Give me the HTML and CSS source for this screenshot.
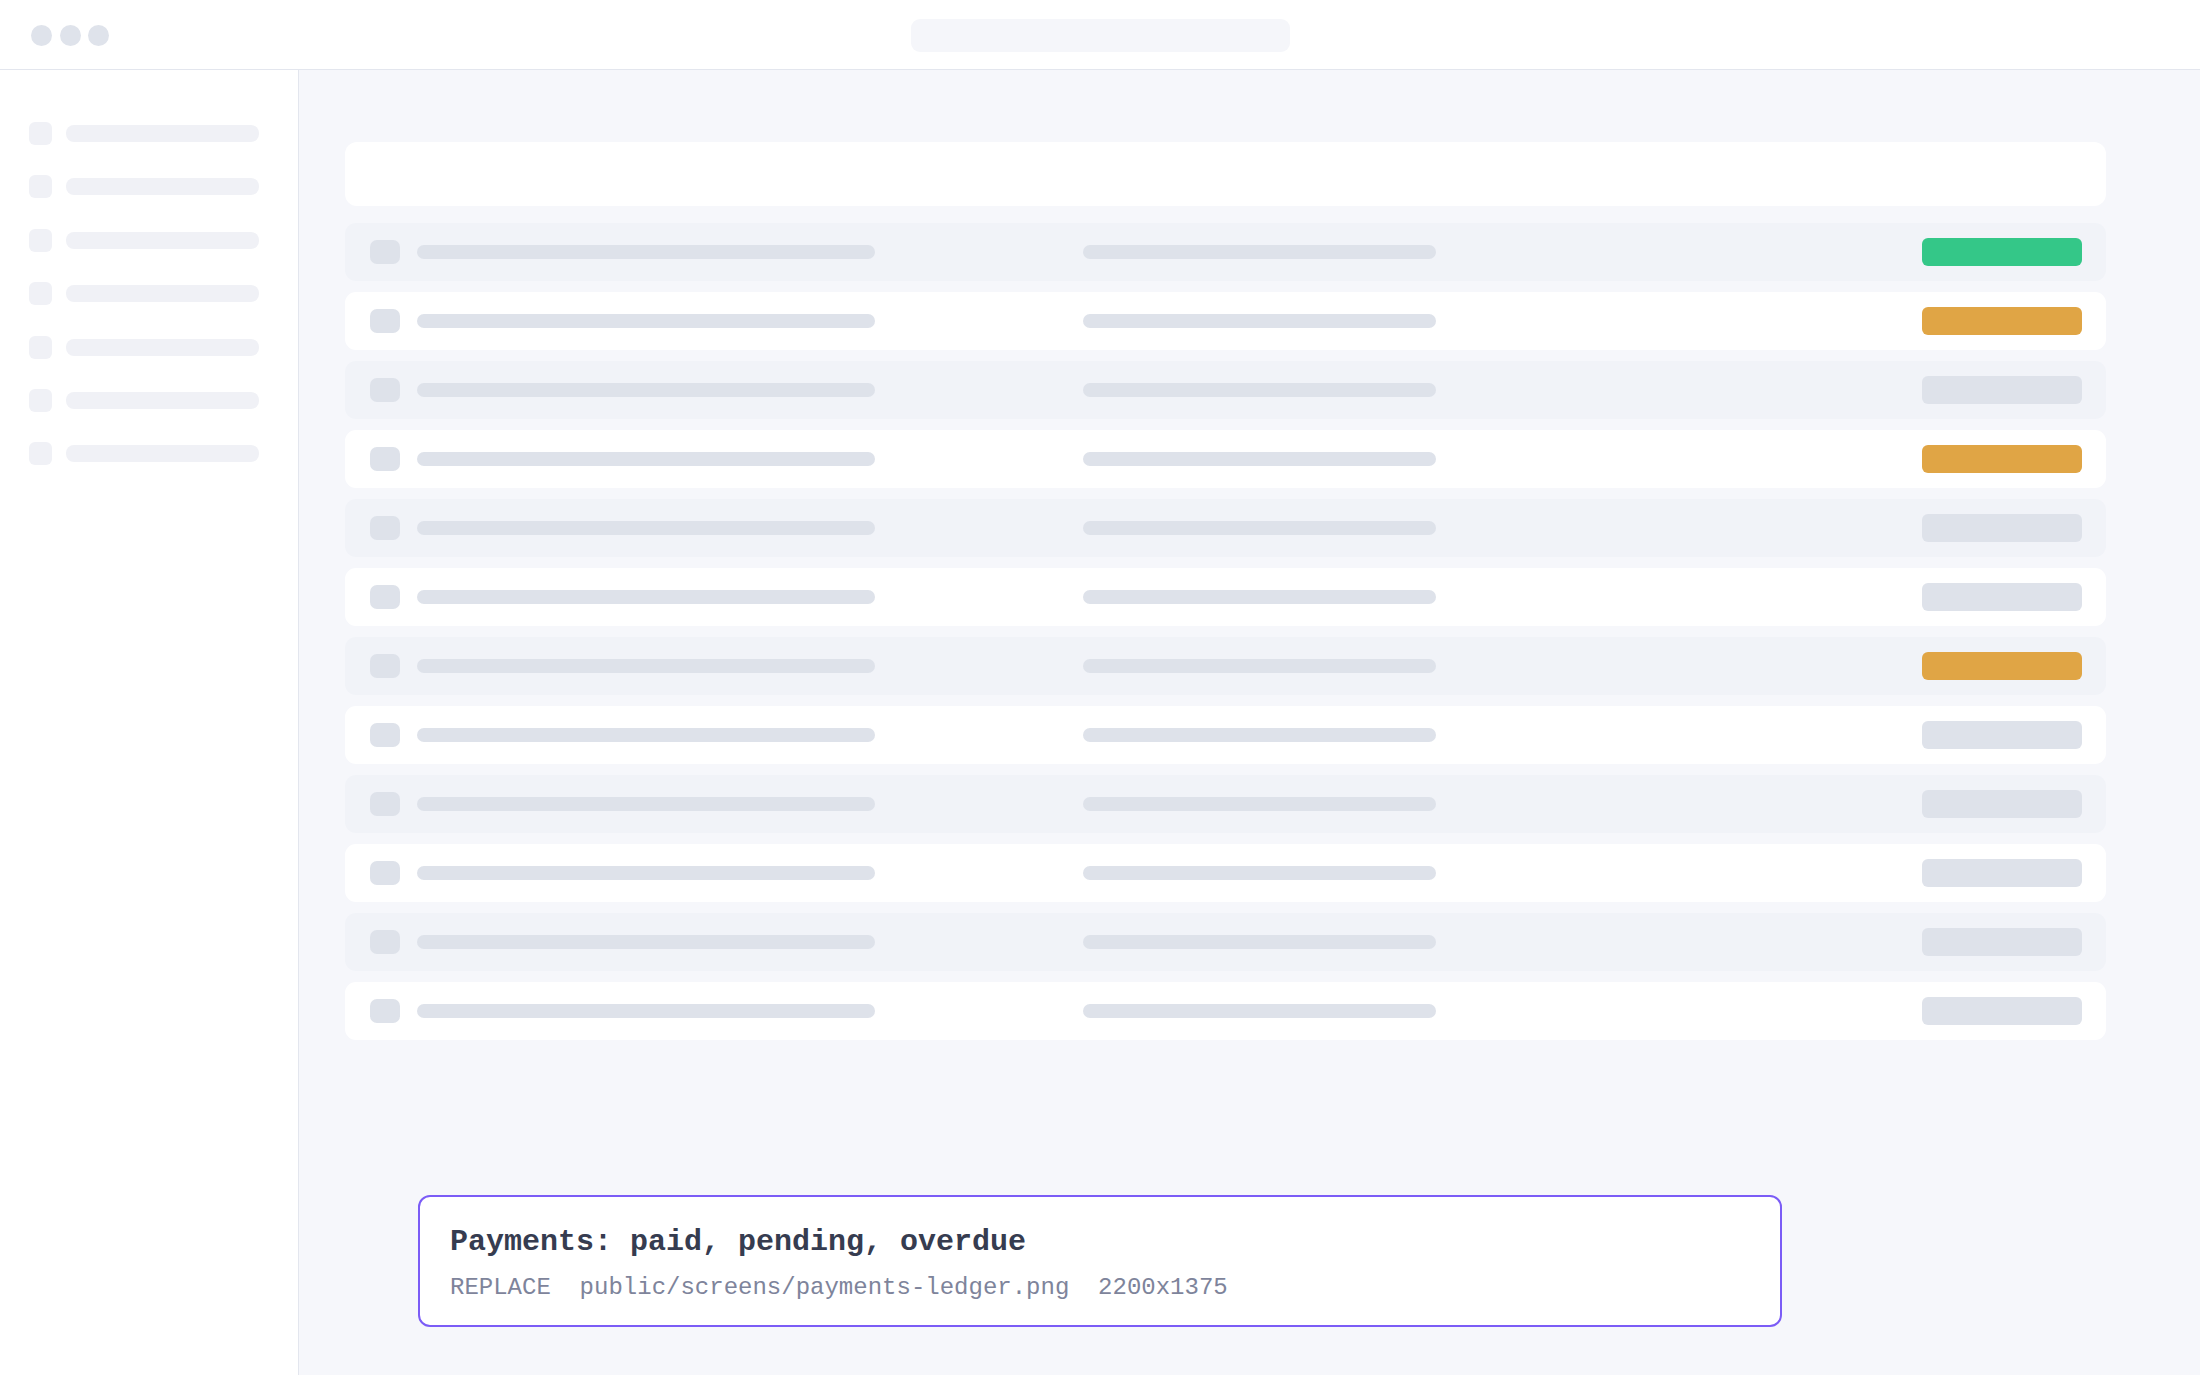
FILE: index.html
```html
<!DOCTYPE html>
<html>
<head>
    <link rel="stylesheet" href="styles.css">
</head>
<body>
    <div id="app">
        <div id="topbar">
            <div class="dots">
                <span class="dot"></span>
                <span class="dot"></span>
                <span class="dot"></span>
            </div>
            <div class="address"></div>
            <div></div>
        </div>
        <div id="layout">
            <div id="sidebar">
                <div class="nav-item"><span class="nav-icon"></span><span class="nav-label"></span></div>
                <div class="nav-item"><span class="nav-icon"></span><span class="nav-label"></span></div>
                <div class="nav-item"><span class="nav-icon"></span><span class="nav-label"></span></div>
                <div class="nav-item"><span class="nav-icon"></span><span class="nav-label"></span></div>
                <div class="nav-item"><span class="nav-icon"></span><span class="nav-label"></span></div>
                <div class="nav-item"><span class="nav-icon"></span><span class="nav-label"></span></div>
                <div class="nav-item"><span class="nav-icon"></span><span class="nav-label"></span></div>
            </div>
            <div id="main">
                <div class="toolbar"></div>
                <div class="ledger">
                    <div class="row"><span class="check"></span><span class="cell-name"></span><span class="cell-ref"></span><span class="status paid"></span></div>
                    <div class="row"><span class="check"></span><span class="cell-name"></span><span class="cell-ref"></span><span class="status pending"></span></div>
                    <div class="row"><span class="check"></span><span class="cell-name"></span><span class="cell-ref"></span><span class="status"></span></div>
                    <div class="row"><span class="check"></span><span class="cell-name"></span><span class="cell-ref"></span><span class="status pending"></span></div>
                    <div class="row"><span class="check"></span><span class="cell-name"></span><span class="cell-ref"></span><span class="status"></span></div>
                    <div class="row"><span class="check"></span><span class="cell-name"></span><span class="cell-ref"></span><span class="status"></span></div>
                    <div class="row"><span class="check"></span><span class="cell-name"></span><span class="cell-ref"></span><span class="status pending"></span></div>
                    <div class="row"><span class="check"></span><span class="cell-name"></span><span class="cell-ref"></span><span class="status"></span></div>
                    <div class="row"><span class="check"></span><span class="cell-name"></span><span class="cell-ref"></span><span class="status"></span></div>
                    <div class="row"><span class="check"></span><span class="cell-name"></span><span class="cell-ref"></span><span class="status"></span></div>
                    <div class="row"><span class="check"></span><span class="cell-name"></span><span class="cell-ref"></span><span class="status"></span></div>
                    <div class="row"><span class="check"></span><span class="cell-name"></span><span class="cell-ref"></span><span class="status"></span></div>
                </div>
                <div class="caption">
                    <div class="caption-title">Payments: paid, pending, overdue</div>
                    <div class="caption-meta">REPLACE  public/screens/payments-ledger.png  2200x1375</div>
                </div>
            </div>
        </div>
    </div>
</body>
</html>
```

FILE: styles.css
```css
body {
    margin: 0;
    background: #f6f7fb;
    font-family: "Liberation Mono", "DejaVu Sans Mono", monospace;
}

#app {
    display: flex;
    flex-direction: column;
    height: 1375px;
    overflow: hidden;
}

#topbar {
    display: grid;
    grid-template-columns: 1fr auto 1fr;
    align-items: center;
    height: 69px;
    background: #fff;
    border-bottom: 1px solid #e3e6ee;
    padding: 0 31px;
}

.dots {
    display: flex;
    gap: 7.5px;
    margin-top: 1px;
}

.dot {
    width: 21px;
    height: 21px;
    border-radius: 50%;
    background: #dfe3eb;
}

.address {
    width: 379px;
    height: 33px;
    border-radius: 9px;
    background: #f5f6fa;
    margin-top: 1px;
}

#layout {
    display: flex;
    flex: 1;
}

#sidebar {
    width: 299px;
    background: #fff;
    border-right: 1px solid #e3e6ee;
    padding: 52px 0 0 29px;
    box-sizing: border-box;
    display: flex;
    flex-direction: column;
    gap: 30.4px;
}

.nav-item {
    display: flex;
    align-items: center;
    gap: 14px;
    height: 23px;
}

.nav-icon {
    width: 23px;
    height: 23px;
    border-radius: 6px;
    background: #f0f1f6;
}

.nav-label {
    width: 193px;
    height: 17px;
    border-radius: 8px;
    background: #f0f1f6;
}

#main {
    flex: 1;
    padding: 72px 94px 0 46px;
}

.toolbar {
    height: 64px;
    background: #fff;
    border-radius: 12px;
    margin-bottom: 17px;
}

.ledger {
    display: flex;
    flex-direction: column;
    gap: 11px;
}

.row {
    display: flex;
    align-items: center;
    height: 58px;
    padding: 0 24px 0 25px;
    border-radius: 11px;
    background: #f1f3f8;
}

.row:nth-child(even) {
    background: #fff;
}

.check {
    width: 30px;
    height: 24px;
    border-radius: 7px;
    background: #dee2ea;
    margin-right: 17px;
}

.cell-name {
    width: 458px;
    height: 14px;
    border-radius: 7px;
    background: #dee2ea;
}

.cell-ref {
    width: 353px;
    height: 14px;
    border-radius: 7px;
    background: #dee2ea;
    margin-left: 208px;
}

.status {
    width: 160px;
    height: 28px;
    border-radius: 6px;
    background: #dee2ea;
    margin-left: auto;
}

.status.paid {
    background: #34c788;
}

.status.pending {
    background: #e0a545;
}

.caption {
    width: 1364px;
    box-sizing: border-box;
    margin: 155px 0 0 73px;
    padding: 27px 28px 23px 30px;
    background: #fff;
    border: 2px solid #7b5cf6;
    border-radius: 12px;
}

.caption-title {
    font-size: 30px;
    line-height: 36px;
    font-weight: bold;
    color: #363c50;
}

.caption-meta {
    margin-top: 13px;
    font-size: 24px;
    line-height: 29px;
    color: #7e849b;
    white-space: pre;
}
```
